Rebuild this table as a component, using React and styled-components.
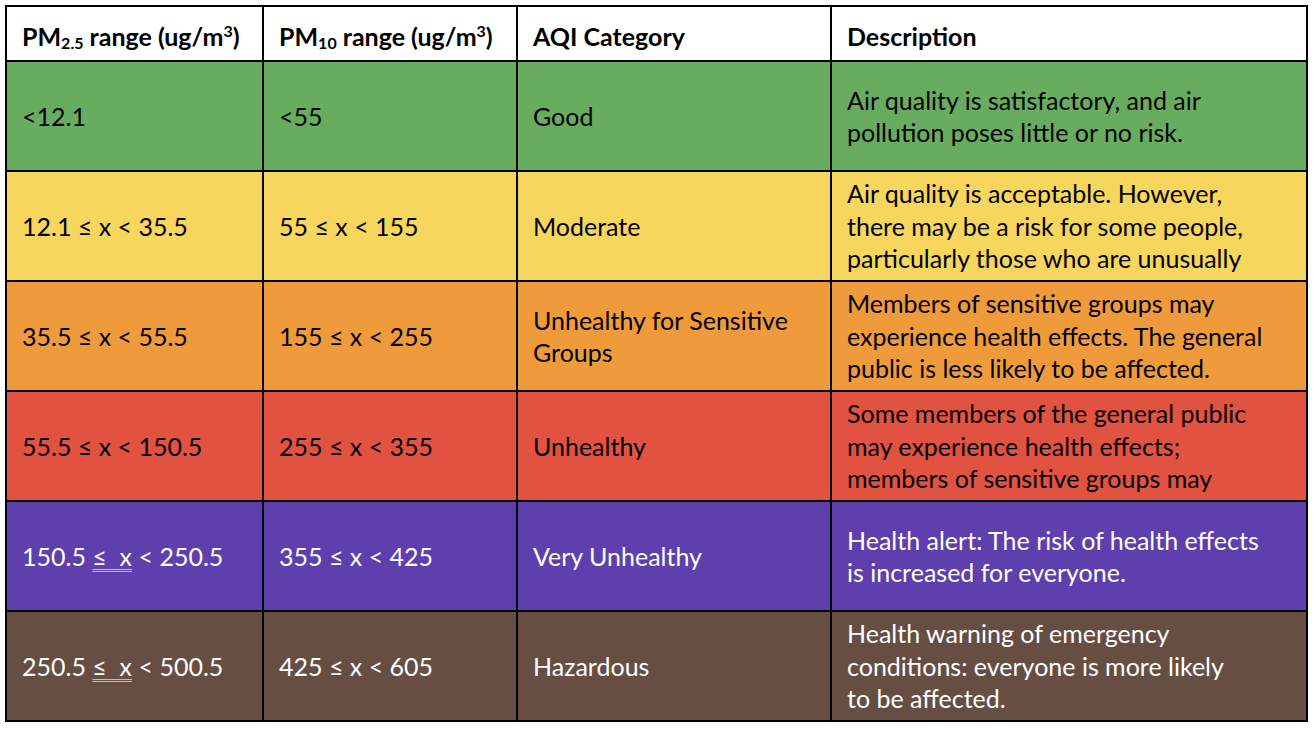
import React from 'react';
import styled, { createGlobalStyle } from 'styled-components';

const GlobalStyle = createGlobalStyle`
  html, body {
    margin: 0;
    padding: 0;
    background: #ffffff;
  }
  body {
    padding: 5px;
    font-family: Lato, "Open Sans", "Liberation Sans", sans-serif;
  }
`;

const Table = styled.div`
  display: grid;
  grid-template-columns: 255px 252px 312px 474px;
  grid-template-rows: 53px repeat(6, 108px);
  gap: 2px;
  padding: 2px;
  background: #000;
  width: max-content;
`;

const HeadCell = styled.div`
  background: #ffffff;
  color: #000;
  display: flex;
  align-items: center;
  padding: 4px 0 0 15px;
  font-size: 25px;
  font-weight: 700;
  white-space: nowrap;
`;

const HeadText = styled.span`
  sub, sup {
    font-size: 16px;
    line-height: 0;
  }
  sub {
    vertical-align: -3px;
  }
  sup {
    vertical-align: 9px;
  }
`;

const Cell = styled.div`
  background: ${p => p.$bg};
  color: ${p => p.$fg};
  display: flex;
  flex-direction: column;
  justify-content: ${p => (p.$top ? 'flex-start' : 'center')};
  padding: ${p => (p.$top ? '5px 0 0 15px' : '0 0 0 15px')};
  overflow: hidden;
  font-size: 25px;
  line-height: 32.5px;
`;

const Line = styled.span`
  display: block;
  white-space: nowrap;
`;

const Flagged = styled.span`
  white-space: pre;
  text-decoration-line: underline;
  text-decoration-style: double;
  text-decoration-color: #a9c6f3;
  text-decoration-thickness: 1px;
  text-underline-offset: 3px;
`;

const rows = [
  {
    bg: '#68ad5f', fg: '#000',
    pm25: ['<12.1'], pm10: '<55', cat: ['Good'],
    desc: ['Air quality is satisfactory, and air', 'pollution poses little or no risk.'],
  },
  {
    bg: '#f6d65c', fg: '#000', top: true,
    pm25: ['12.1 ≤ x < 35.5'], pm10: '55 ≤ x < 155', cat: ['Moderate'],
    desc: [
      'Air quality is acceptable. However,',
      'there may be a risk for some people,',
      'particularly those who are unusually',
      'sensitive to air pollution.',
    ],
  },
  {
    bg: '#f09b3b', fg: '#000',
    pm25: ['35.5 ≤ x < 55.5'], pm10: '155 ≤ x < 255', cat: ['Unhealthy for Sensitive', 'Groups'],
    desc: [
      'Members of sensitive groups may',
      'experience health effects. The general',
      'public is less likely to be affected.',
    ],
  },
  {
    bg: '#e15241', fg: '#000', top: true,
    pm25: ['55.5 ≤ x < 150.5'], pm10: '255 ≤ x < 355', cat: ['Unhealthy'],
    desc: [
      'Some members of the general public',
      'may experience health effects;',
      'members of sensitive groups may',
      'experience more serious health effects.',
    ],
  },
  {
    bg: '#5f3ead', fg: '#fff', flag: true,
    pm25: ['150.5 ', '≤  x', ' < 250.5'], pm10: '355 ≤ x < 425', cat: ['Very Unhealthy'],
    desc: ['Health alert: The risk of health effects', 'is increased for everyone.'],
  },
  {
    bg: '#674e43', fg: '#fff', flag: true,
    pm25: ['250.5 ', '≤  x', ' < 500.5'], pm10: '425 ≤ x < 605', cat: ['Hazardous'],
    desc: [
      'Health warning of emergency',
      'conditions: everyone is more likely',
      'to be affected.',
    ],
  },
];

const App = () => (
  <>
    <GlobalStyle />
    <Table>
      <HeadCell>
        <HeadText>PM<sub>2.5</sub> range (ug/m<sup>3</sup>)</HeadText>
      </HeadCell>
      <HeadCell>
        <HeadText>PM<sub>10</sub> range (ug/m<sup>3</sup>)</HeadText>
      </HeadCell>
      <HeadCell>
        <HeadText>AQI Category</HeadText>
      </HeadCell>
      <HeadCell>
        <HeadText>Description</HeadText>
      </HeadCell>

      {rows.map((r, i) => (
        <React.Fragment key={i}>
          <Cell $bg={r.bg} $fg={r.fg}>
            <Line>
              {r.flag ? (
                <>
                  {r.pm25[0]}
                  <Flagged>{r.pm25[1]}</Flagged>
                  {r.pm25[2]}
                </>
              ) : (
                r.pm25[0]
              )}
            </Line>
          </Cell>
          <Cell $bg={r.bg} $fg={r.fg}>
            <Line>{r.pm10}</Line>
          </Cell>
          <Cell $bg={r.bg} $fg={r.fg}>
            {r.cat.map(t => (
              <Line key={t}>{t}</Line>
            ))}
          </Cell>
          <Cell $bg={r.bg} $fg={r.fg} $top={r.top}>
            {r.desc.map(t => (
              <Line key={t}>{t}</Line>
            ))}
          </Cell>
        </React.Fragment>
      ))}
    </Table>
  </>
);

export default App;
